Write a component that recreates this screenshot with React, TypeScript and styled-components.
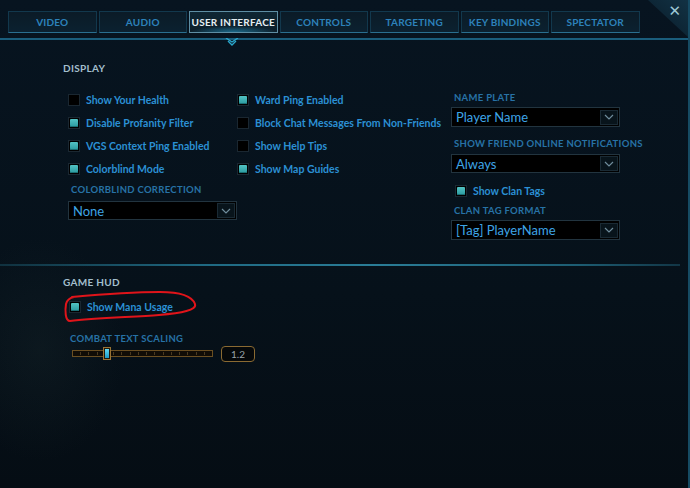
import React from 'react';
import styled, { createGlobalStyle, css } from 'styled-components';

const GlobalStyle = createGlobalStyle`
	html, body {
		margin: 0;
		padding: 0;
		background: #06111a;
	}
	* {
		box-sizing: border-box;
	}
`;

const tabs = ['Video', 'Audio', 'User Interface', 'Controls', 'Targeting', 'Key Bindings', 'Spectator'];
const activeTab = 'User Interface';

const Page = styled.div`
	position: relative;
	width: 690px;
	height: 488px;
	overflow: hidden;
	font-family: Lato, 'Open Sans', sans-serif;
	background:
		radial-gradient(ellipse 120px 160px at 40px 350px, rgba(40, 60, 60, 0.18), transparent 70%),
		linear-gradient(180deg, #071420 0%, #06111a 60%, #050d14 100%);
	border-right: 2px solid #164b63;
`;

const TabBar = styled.div`
	display: flex;
	gap: 2px;
	padding: 11px 0 0 8px;
`;

const Tab = styled.div<{ $active?: boolean }>`
	width: 88.5px;
	height: 22px;
	display: flex;
	align-items: center;
	justify-content: center;
	font-size: 10px;
	font-weight: 700;
	letter-spacing: 0.2px;
	text-transform: uppercase;
	color: #2d82bb;
	background: linear-gradient(180deg, #0b1b27 0%, #0b2130 100%);
	border: 1px solid #12384d;
	border-bottom: 1px solid #2a6f90;
	${(p) =>
		p.$active &&
		css`
			color: #e6eef2;
			border: 1px solid #5e8ea4;
			background: radial-gradient(ellipse 50% 30% at 50% 100%, rgba(40, 170, 220, 0.55), transparent),
				linear-gradient(180deg, #0f2633 0%, #0c1e2a 100%);
		`}
`;

const TabRule = styled.div`
	position: relative;
	height: 2px;
	margin-top: 5px;
	background: #1a5d7c;
`;

const Chevron = styled.svg`
	position: absolute;
	left: 225px;
	top: 0;
`;

const CloseCorner = styled.div`
	position: absolute;
	top: 0;
	right: 0;
	width: 40px;
	height: 37px;
	clip-path: polygon(0 0, 100% 0, 100% 100%);
	background: linear-gradient(222deg, #123244 0%, #0c2332 62%, #1f94b0 64%, #0a1c28 68%);
`;

const CloseGlyph = styled.div`
	position: absolute;
	top: 2px;
	right: 7px;
	font-family: 'DejaVu Sans', sans-serif;
	font-size: 15px;
	font-weight: 700;
	color: #9cc8d6;
`;

const Content = styled.div`
	padding-left: 63px;
`;

const SectionTitle = styled.div<{ $top: number }>`
	margin-top: ${(p) => p.$top}px;
	height: 12px;
	line-height: 12px;
	font-size: 10px;
	font-weight: 700;
	letter-spacing: 0.3px;
	color: #a3bfcd;
`;

const DisplayGrid = styled.div`
	display: grid;
	grid-template-columns: 169px 214px 169px;
	margin: 14px 0 0 5px;
`;

const Column = styled.div`
	display: flex;
	flex-direction: column;
`;

const CheckRow = styled.div`
	height: 23px;
	display: flex;
	align-items: center;
	gap: 6px;
`;

const Box = styled.div<{ $on?: boolean }>`
	width: 12px;
	height: 12px;
	background: #000;
	border: 1px solid #1a2731;
	display: flex;
	align-items: center;
	justify-content: center;
	&::after {
		content: '';
		display: ${(p) => (p.$on ? 'block' : 'none')};
		width: 8px;
		height: 8px;
		border-radius: 1px;
		background: linear-gradient(180deg, #52c3c4 0%, #2b9a9f 100%);
		box-shadow: inset 0 -1px 0 #1b6f74;
	}
`;

const CheckLabel = styled.span`
	font-size: 10.5px;
	font-weight: 700;
	color: #2b90d4;
	white-space: nowrap;
`;

const FieldLabel = styled.div<{ $top: number; $indent?: number }>`
	margin-top: ${(p) => p.$top}px;
	margin-left: ${(p) => p.$indent ?? 3}px;
	height: 12px;
	line-height: 12px;
	font-size: 9.5px;
	font-weight: 700;
	letter-spacing: 0.3px;
	text-transform: uppercase;
	color: #2772a6;
	white-space: nowrap;
`;

const Select = styled.div<{ $top: number; $h?: number }>`
	margin-top: ${(p) => p.$top}px;
	width: 169px;
	height: ${(p) => p.$h ?? 20}px;
	display: flex;
	align-items: center;
	justify-content: space-between;
	padding: 0 1px 0 4px;
	background: #000;
	border: 1px solid #22343f;
	font-size: 13px;
	color: #3ea4e6;
`;

const SelectArrow = styled.div`
	width: 18px;
	height: 15px;
	display: flex;
	align-items: center;
	justify-content: center;
	background: #08141b;
	border: 1px solid #1a2a34;
`;

const ClanCheck = styled.div`
	margin: 6px 0 0 4px;
`;

const Separator = styled.div`
	height: 2px;
	margin: 24px 8px 0 0;
	background: linear-gradient(90deg, #10313f 0%, #1f6982 30%, #2a7d97 55%, #1d5d73 85%, #123646 100%);
`;

const HudBody = styled.div`
	position: relative;
	margin: 7px 0 0 6px;
`;

const Scribble = styled.svg`
	position: absolute;
	left: -5px;
	top: -5.5px;
	pointer-events: none;
`;

const SliderRow = styled.div`
	display: flex;
	align-items: center;
	gap: 8px;
	margin: 1px 0 0 3px;
	height: 16px;
`;

const Track = styled.div`
	position: relative;
	width: 141px;
	height: 7px;
	background: #100c06;
	border: 1px solid #6a4f22;
	display: flex;
	justify-content: space-evenly;
	align-items: center;
`;

const Tick = styled.div`
	width: 1px;
	height: 3px;
	background: #4a3a20;
`;

const Thumb = styled.div`
	position: absolute;
	left: 30px;
	top: -4px;
	width: 8px;
	height: 13px;
	background: #22180a;
	border: 1px solid #9a7434;
	display: flex;
	align-items: center;
	justify-content: center;
	&::after {
		content: '';
		width: 4px;
		height: 9px;
		background: linear-gradient(180deg, #5fd8f2 0%, #1a9ac8 100%);
	}
`;

const ValueBox = styled.div`
	width: 34px;
	height: 16px;
	border: 1.5px solid #8a6a32;
	border-radius: 4px;
	background: #05080a;
	display: flex;
	align-items: center;
	justify-content: center;
	font-size: 10px;
	color: #9aa3a8;
`;

const ArrowIcon = () => (
	<svg width="10" height="6" viewBox="0 0 10 6">
		<path d="M1 1 L5 5 L9 1" fill="none" stroke="#6f8c9b" strokeWidth="1.2" />
	</svg>
);

const Check = ({ on, label }: { on?: boolean; label: string }) => (
	<CheckRow>
		<Box $on={on} />
		<CheckLabel>{label}</CheckLabel>
	</CheckRow>
);

const Dropdown = ({ value, top, h }: { value: string; top: number; h?: number }) => (
	<Select $top={top} $h={h}>
		<span>{value}</span>
		<SelectArrow>
			<ArrowIcon />
		</SelectArrow>
	</Select>
);

export default function App() {
	return (
		<Page>
			<GlobalStyle />
			<TabBar>
				{tabs.map((t) => (
					<Tab key={t} $active={t === activeTab}>
						{t}
					</Tab>
				))}
			</TabBar>
			<TabRule>
				<Chevron width="14" height="8" viewBox="0 0 14 8">
					<path d="M1 0 L7 4 L13 0" fill="none" stroke="#2aa7cc" strokeWidth="1.4" />
					<path d="M3 3 L7 7 L11 3" fill="none" stroke="#2aa7cc" strokeWidth="1.4" />
				</Chevron>
			</TabRule>
			<CloseCorner />
			<CloseGlyph>✕</CloseGlyph>

			<Content>
				<SectionTitle $top={22}>DISPLAY</SectionTitle>
				<DisplayGrid>
					<Column>
						<Check label="Show Your Health" />
						<Check on label="Disable Profanity Filter" />
						<Check on label="VGS Context Ping Enabled" />
						<Check on label="Colorblind Mode" />
						<FieldLabel $top={4}>Colorblind Correction</FieldLabel>
						<Dropdown value="None" top={5} h={19} />
					</Column>
					<Column>
						<Check on label="Ward Ping Enabled" />
						<Check label="Block Chat Messages From Non-Friends" />
						<Check label="Show Help Tips" />
						<Check on label="Show Map Guides" />
					</Column>
					<Column>
						<FieldLabel $top={4}>Name Plate</FieldLabel>
						<Dropdown value="Player Name" top={3} />
						<FieldLabel $top={11}>Show Friend Online Notifications</FieldLabel>
						<Dropdown value="Always" top={4} h={19} />
						<ClanCheck>
							<Check on label="Show Clan Tags" />
						</ClanCheck>
						<FieldLabel $top={3}>Clan Tag Format</FieldLabel>
						<Dropdown value="[Tag] PlayerName" top={3} />
					</Column>
				</DisplayGrid>
			</Content>

			<Separator />

			<Content>
				<SectionTitle $top={10}>GAME HUD</SectionTitle>
				<HudBody>
					<Check on label="Show Mana Usage" />
					<Scribble width="140" height="34" viewBox="0 0 140 34">
						<path
							d="M8 7 C30 5, 70 2, 96 2 C115 2, 128 6, 131 14 C133 20, 118 23, 95 25 C70 27, 30 28, 6 31 C1 31, 1 20, 2 14 C3 10, 5 8, 10 7"
							fill="none"
							stroke="#e0141a"
							strokeWidth="2"
							strokeLinecap="round"
						/>
					</Scribble>
					<FieldLabel $top={14.5} $indent={1}>
						Combat Text Scaling
					</FieldLabel>
					<SliderRow>
						<Track>
							{Array.from({ length: 16 }).map((_, i) => (
								<Tick key={i} />
							))}
							<Thumb />
						</Track>
						<ValueBox>1.2</ValueBox>
					</SliderRow>
				</HudBody>
			</Content>
		</Page>
	);
}
